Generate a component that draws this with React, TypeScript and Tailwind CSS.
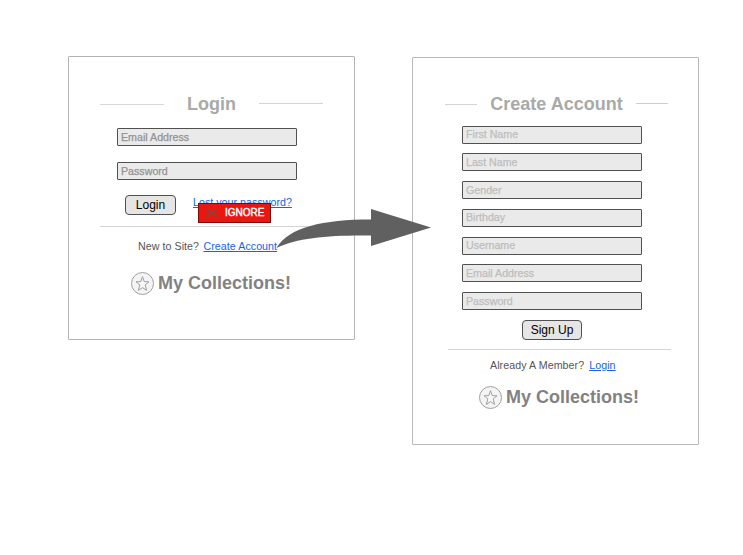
import React from "react";

function Field({ label, muted }: { label: string; muted?: boolean }) {
  return (
    <div
      className={`box-border flex h-[18px] w-[180px] items-center rounded-[1px] border border-[#505050] bg-[#eaeaea] pl-[3px] text-[10.67px] leading-none [-webkit-text-stroke:0.25px_currentColor] ${
        muted ? "text-[#bdbdbd]" : "text-[#929292]"
      }`}
    >
      {label}
    </div>
  );
}

function Brand() {
  return (
    <div className="flex h-6 items-center gap-1">
      <svg width="23" height="23" viewBox="0 0 23 23" fill="none" stroke="#a0a0a0" strokeWidth="1">
        <circle cx="11.5" cy="11.5" r="11" fill="#f4f4f4" />
        <path d="M11.5 4.6 L13.2 9.6 L18 9.8 L14.2 12.8 L15.6 18.4 L11.5 15.6 L7.4 18.4 L8.8 12.8 L5 9.8 L9.8 9.6 Z" fill="#f7f7f7" />
      </svg>
      <span className="whitespace-nowrap text-[18px] font-bold leading-6 text-[#828282]">My Collections!</span>
    </div>
  );
}

function Link({ children }: { children: React.ReactNode }) {
  return (
    <a className="whitespace-nowrap text-[#1464e8] underline decoration-1 underline-offset-[1px]">{children}</a>
  );
}

const fields = ["First Name", "Last Name", "Gender", "Birthday", "Username", "Email Address", "Password"];

export default function App() {
  return (
    <main className="relative flex h-[555px] w-[743px] items-start overflow-hidden bg-white pl-[68px] font-['Liberation_Sans',Arial,sans-serif]">
      <section className="mt-14 h-[284px] w-[287px] shrink-0 rounded-[1px] border border-[#b4b4b4]">
        <div className="ml-[31px] mt-[35px] flex h-6 w-[223px] items-center justify-between">
          <div className="h-px w-16 bg-[#d8d8d8]" />
          <h1 className="text-[18px] font-bold leading-6 text-[#a9a9a9]">Login</h1>
          <div className="mb-px h-px w-16 bg-[#d4d4d4]" />
        </div>
        <div className="ml-[48px] mt-[12px] flex flex-col gap-[16px]">
          <Field label="Email Address" />
          <Field label="Password" />
        </div>
        <div className="ml-14 mt-[15px] flex">
          <button className="h-5 w-[51px] rounded-[4px] border border-[#505050] bg-[#e5e5e5] text-[12px] leading-[18px] text-black">
            Login
          </button>
          <div className="ml-[17px] -mt-px h-5 text-[10.67px] leading-4 tracking-[0.03px]">
            <Link>Lost your password?</Link>
          </div>
        </div>
        <div className="ml-[31px] mt-[11px] h-px w-[223px] bg-[#d4d4d4]" />
        <div className="ml-[69px] mt-[11px] flex h-4 gap-[4.5px] text-[10.67px] leading-4 tracking-[0.05px] text-[#555]">
          <span>New to Site?</span>
          <Link>Create Account</Link>
        </div>
        <div className="ml-[62px] mt-[17px]">
          <Brand />
        </div>
      </section>

      <section className="ml-[57px] mt-[57px] h-[388px] w-[287px] shrink-0 rounded-[1px] border border-[#b8b8b8]">
        <div className="ml-8 mt-[34px] flex h-6 w-[223px] items-center justify-between">
          <div className="h-px w-8 bg-[#d4d4d4]" />
          <h1 className="whitespace-nowrap text-[18px] font-bold leading-6 text-[#a9a9a9]">Create Account</h1>
          <div className="mb-[2px] h-px w-8 bg-[#cecece]" />
        </div>
        <div className="ml-[49px] mt-[9.5px] flex flex-col gap-[9.75px]">
          {fields.map((name) => (
            <Field key={name} label={name} muted />
          ))}
        </div>
        <button className="ml-[109px] mt-[10px] block h-5 w-[60px] rounded-[4px] border border-[#505050] bg-[#e5e5e5] text-[12px] leading-[17px] text-black">
          Sign Up
        </button>
        <div className="ml-[35px] mt-[9px] h-px w-[223px] bg-[#d4d4d4]" />
        <div className="ml-[77px] mt-[7px] flex h-4 gap-[5px] text-[10.67px] leading-4 tracking-[0.07px] text-[#555]">
          <span className="whitespace-nowrap">Already A Member?</span>
          <Link>Login</Link>
        </div>
        <div className="ml-[66px] mt-[12px]">
          <Brand />
        </div>
      </section>

      <div className="absolute left-[198px] top-[203px] flex h-5 w-[73px] items-center border border-[#7b0b08] bg-[#eb1610] pl-[6px]">
        <svg width="14" height="10" viewBox="0 0 14 10" fill="none" stroke="#65534f" strokeWidth="1.4">
          <path d="M0.5 8.5 C5 6.5 9 4 13 0.8 M1.5 1.2 C5 3 9 6 13 8.8" />
        </svg>
        <span className="ml-[6px] text-[10px] leading-none text-white [-webkit-text-stroke:0.4px_white]">IGNORE</span>
      </div>
      <svg className="absolute left-[275px] top-[207px]" width="158" height="44" viewBox="275 207 158 44">
        <path d="M276.5 248 C289 227 323 219.5 371 219.5 V209 L431 227.5 L371 246 V235.5 C330 235 298 237.5 276.5 248 Z" fill="#606060" />
      </svg>
    </main>
  );
}
